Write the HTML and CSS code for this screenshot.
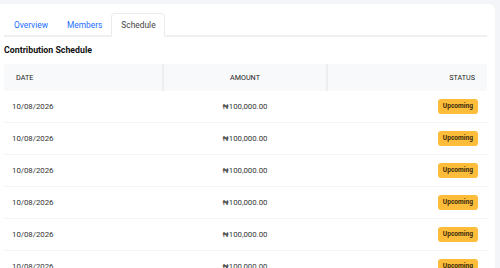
FILE: index.html
```html
<!DOCTYPE html>
<html>
<head>
    <title>Contribution Schedule</title>
    <meta name="viewport" content="width=device-width, initial-scale=1">
    <link rel="stylesheet" href="styles.css">
</head>
<body>
    <div class="card">
        <div class="tabs">
            <a class="tab">Overview</a>
            <a class="tab">Members</a>
            <a class="tab active">Schedule</a>
        </div>

        <h3 class="title">Contribution Schedule</h3>

        <table class="schedule">
            <thead>
                <tr>
                    <th class="col-date">DATE</th>
                    <th class="col-amount">AMOUNT</th>
                    <th class="col-status">STATUS</th>
                </tr>
            </thead>
            <tbody>
                <tr><td>10/08/2026</td><td class="col-amount">₦100,000.00</td><td class="col-status"><span class="badge">Upcoming</span></td></tr>
                <tr><td>10/08/2026</td><td class="col-amount">₦100,000.00</td><td class="col-status"><span class="badge">Upcoming</span></td></tr>
                <tr><td>10/08/2026</td><td class="col-amount">₦100,000.00</td><td class="col-status"><span class="badge">Upcoming</span></td></tr>
                <tr><td>10/08/2026</td><td class="col-amount">₦100,000.00</td><td class="col-status"><span class="badge">Upcoming</span></td></tr>
                <tr><td>10/08/2026</td><td class="col-amount">₦100,000.00</td><td class="col-status"><span class="badge">Upcoming</span></td></tr>
                <tr><td>10/08/2026</td><td class="col-amount">₦100,000.00</td><td class="col-status"><span class="badge">Upcoming</span></td></tr>
            </tbody>
        </table>
    </div>
</body>
</html>
```

FILE: styles.css
```css
body {
    font-family: Roboto, "Liberation Sans", Arial, sans-serif;
    background-color: #f4f5f9;
    color: #333;
    margin: 0;
    overflow: hidden;
}

.card {
    background-color: #fff;
    margin: 4px 5px 0 -8px;
    padding: 9px 8px 0 12px;
    border-radius: 6px;
    height: 300px;
}

.tabs {
    display: flex;
    border-bottom: 2px solid #eef0f2;
}

.tab {
    font-size: 8.4px;
    line-height: 12px;
    padding: 5px 8px 4px 9px;
    color: #1a6dff;
    border: 1px solid transparent;
    border-bottom: none;
    border-radius: 4px 4px 0 0;
    margin-bottom: -2px;
}

.tab.active {
    color: #444;
    background-color: #fff;
    border-color: #e9ecef;
    border-bottom: 2px solid #fff;
}

.title {
    font-size: 8.8px;
    font-weight: bold;
    color: #111;
    margin: 7px 0 8px 0;
    line-height: 12px;
}

.schedule {
    width: 100%;
    border-collapse: collapse;
    font-size: 7.8px;
}

.schedule th {
    background-color: #f8f9fa;
    font-weight: normal;
    font-size: 7.2px;
    color: #222;
    height: 27px;
    padding: 0 12px;
    border-left: 2px solid #eceef1;
}

.schedule th:first-child {
    border-left: none;
    border-top-left-radius: 4px;
}

.schedule td {
    height: 31px;
    padding: 0 8px;
    border-bottom: 1px solid #f3f4f6;
    color: #333;
}

.col-date {
    text-align: left;
    width: 134px;
}

.col-amount {
    text-align: center;
}

.col-status {
    text-align: right;
    width: 135px;
}

.schedule td.col-status {
    padding-right: 9px;
}

.badge {
    display: inline-block;
    background-color: #fdbd3a;
    color: #3a2c0c;
    font-size: 6.6px;
    font-weight: bold;
    padding: 3px 5px;
    border-radius: 3px;
    line-height: 9px;
}
```
